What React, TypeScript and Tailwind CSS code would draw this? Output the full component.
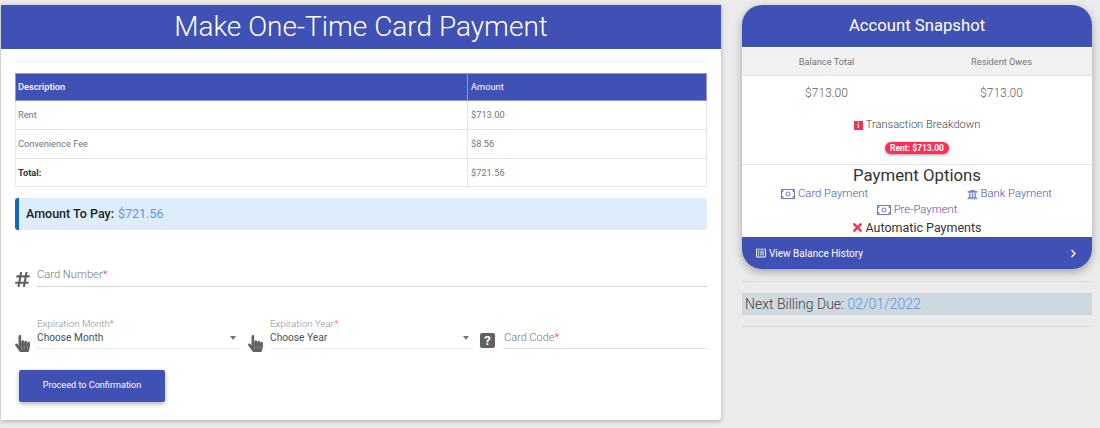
import { FaChevronRight, FaHandPointer, FaHashtag, FaRegListAlt, FaTimes, FaUniversity } from 'react-icons/fa';

const Req = () => <span className="text-[#ff2d55]">*</span>;

// thin outline banknote, the icon-pack one is too heavy at this size
const MoneyIcon = () => (
  <svg viewBox="0 0 14 10" className="w-[14px] h-[10px]" fill="none" stroke="#5f6fc4" strokeWidth="0.9">
    <rect x="0.5" y="0.5" width="13" height="9" />
    <circle cx="7" cy="5" r="2" />
    <path d="M0.5 2.5 H2 V0.5 M12 0.5 V2.5 H13.5 M0.5 7.5 H2 V9.5 M12 9.5 V7.5 H13.5" />
  </svg>
);

function SelectField({ label, value, width }: { label: string; value: string; width: string }) {
  return (
    <div className={`flex items-end ${width}`}>
      <FaHandPointer className="text-[#616161] w-[15px] h-[17px] mb-[-3px] mr-[7px] shrink-0" />
      <div className="flex-1 min-w-0">
        <div className="text-[9.8px] leading-[12px] font-light text-[#8a8f94]">{label}<Req /></div>
        <div className="flex items-center justify-between h-[19px] border-b border-[#eeeeee] pb-[3px]">
          <span className="text-[10.2px] text-[#495057]">{value}</span>
          <span className="w-0 h-0 border-x-[3.5px] border-x-transparent border-t-[4px] border-t-[#757575] mr-[5px]" />
        </div>
      </div>
    </div>
  );
}

function PayLink({ icon, label }: { icon: React.ReactNode; label: string }) {
  return (
    <span className="inline-flex items-center gap-[3px] text-[11.3px] leading-[16px] font-light text-[#3f51b5]">
      {icon}
      {label}
    </span>
  );
}

export default function App() {
  const rows = [
    { desc: 'Rent', amount: '$713.00', h: 'h-[29px]' },
    { desc: 'Convenience Fee', amount: '$8.56', h: 'h-[29px]' },
    { desc: 'Total:', amount: '$721.56', h: 'h-[28px]', bold: true },
  ];

  return (
    <div className="h-[428px] w-[1100px] overflow-hidden bg-[#ebebeb] flex items-start pt-[5px] pl-[1px] font-['Roboto',sans-serif]">
      <main className="w-[720px] h-[415px] shrink-0 bg-white rounded-br-[3px] shadow-[0_1px_4px_rgba(0,0,0,0.3)]">
        <h1 className="h-[44px] bg-[#3f51b5] text-white text-center text-[28px] leading-[44px] font-light">Make One-Time Card Payment</h1>
        <div className="px-[14px]">
          <hr className="mt-[12px] border-[#f2f2f2]" />
          <table className="mt-[11px] w-[692px] table-fixed border-collapse text-[9.25px]">
            <thead>
              <tr className="h-[27px] bg-[#3f51b5] text-white text-left">
                <th className="w-[452px] pl-[2px] font-medium border border-[#8c97d3]">Description</th>
                <th className="px-[3px] font-normal border border-[#8c97d3]">Amount</th>
              </tr>
            </thead>
            <tbody className="text-[#757575]">
              {rows.map(r => (
                <tr key={r.desc} className={r.h}>
                  <td className={`pl-[2px] border border-[#e6e6e6] ${r.bold ? 'font-bold text-[#333333]' : ''}`}>{r.desc}</td>
                  <td className="px-[3px] border border-[#e6e6e6]">{r.amount}</td>
                </tr>
              ))}
            </tbody>
          </table>

          <div className="mt-[11px] h-[32px] w-[692px] flex items-center gap-[4px] bg-[#deedfc] border-l-[4px] border-[#0d6abf] rounded-[3px] pl-[7px] text-[12.5px]">
            <b className="font-medium text-[#212121]">Amount To Pay:</b>
            <span className="text-[#5c94e8]">$721.56</span>
          </div>

          <div className="mt-[27px] w-[692px] flex items-end">
            <FaHashtag className="text-[#616161] w-[15px] h-[17px] mb-[-1px] mr-[7px] shrink-0" />
            <div className="flex-1 h-[30px] flex items-end pb-[4px] border-b border-[#ced4da] text-[11.2px] leading-[14px] font-light text-[#757575]">
              <span>Card Number<Req /></span>
            </div>
          </div>

          <div className="mt-[31px] w-[692px] flex items-end">
            <SelectField label="Expiration Month" value="Choose Month" width="w-[226px] mr-[7px]" />
            <SelectField label="Expiration Year" value="Choose Year" width="w-[226px]" />
            <span className="w-[15px] h-[15px] ml-[6px] mr-[8px] mb-[1px] shrink-0 rounded-[2px] bg-[#616161] text-white text-center text-[13px] leading-[15px] font-bold">?</span>
            <div className="flex-1 h-[30px] flex items-end pb-[3px] pl-[1px] border-b border-[#dcdce6] text-[11px] leading-[14px] font-light text-[#757575]">
              <span>Card Code<Req /></span>
            </div>
          </div>

          <button className="block mt-[21px] ml-[4px] w-[146px] h-[32px] bg-[#3f51b5] text-white text-[9.1px] rounded-[2px] shadow-[0_2px_5px_rgba(0,0,0,0.3)]">
            Proceed to Confirmation
          </button>
        </div>
      </main>

      <aside className="ml-[21px] w-[350px] shrink-0">
        <section className="h-[264px] rounded-[20px] bg-white overflow-hidden shadow-[0_3px_8px_rgba(0,0,0,0.3)]">
          <h2 className="h-[42px] bg-[#3f51b5] text-white text-center text-[16.7px] leading-[42px]">Account Snapshot</h2>
          <div className="h-[28px] mt-[1px] grid grid-cols-2 gap-[6px] pr-[6px] bg-[#f1f1f1] border-b border-[#e4e4e4] text-[9.2px] text-[#757575] text-center items-center">
            <span>Balance Total</span>
            <span>Resident Owes</span>
          </div>
          <div className="h-[32px] pt-[1px] grid grid-cols-2 gap-[6px] pr-[6px] text-[12px] font-light text-[#616161] text-center items-center">
            <span>$713.00</span>
            <span>$713.00</span>
          </div>
          <div className="mt-[10px] flex items-center justify-center gap-[3px] text-[11.1px] leading-[14px] font-light text-[#424242]">
            <span className="w-[9px] h-[9px] bg-[#ff2d55] text-white text-center text-[8px] leading-[9px] font-bold">i</span>
            Transaction Breakdown
          </div>
          <div className="mt-[10px] flex justify-center">
            <span className="h-[12px] px-[5px] rounded-full bg-[#ff2d55] text-white text-[8.5px] leading-[12px] font-bold shadow-[0_1px_3px_rgba(0,0,0,0.4)]">Rent: $713.00</span>
          </div>
          <div className="mt-[10px] border-t border-[#e4e4e4] text-center">
            <div className="text-[16.8px] leading-[21px] text-[#333333]">Payment Options</div>
            <div className="flex justify-between pl-[39px] pr-[40px]">
              <PayLink icon={<MoneyIcon />} label="Card Payment" />
              <PayLink icon={<FaUniversity className="w-[11px] h-[11px] opacity-70" />} label="Bank Payment" />
            </div>
            <div className="flex justify-center">
              <PayLink icon={<MoneyIcon />} label="Pre-Payment" />
            </div>
            <div className="flex items-center justify-center gap-[2px] text-[12.5px] leading-[19px] text-[#333333]">
              <FaTimes className="text-[#ff2d55] w-[11px] h-[13px]" />
              Automatic Payments
            </div>
          </div>
          <div className="h-[32px] bg-[#3f51b5] text-white flex items-center justify-between pl-[14px] pr-[14px] text-[10px]">
            <span className="flex items-center gap-[3px]">
              <FaRegListAlt className="w-[10px] h-[10px]" />
              View Balance History
            </span>
            <FaChevronRight className="w-[9px] h-[9px]" />
          </div>
        </section>
        <hr className="mt-[12px] border-[#dddddd]" />
        <div className="mt-[11px] h-[22px] bg-[#cdd8df] pl-[3px] text-[14px] leading-[22px] font-light text-[#424242]">
          Next Billing Due: <span className="text-[#5c94e8]">02/01/2022</span>
        </div>
        <hr className="mt-[11px] border-[#dddddd]" />
      </aside>
    </div>
  );
}
